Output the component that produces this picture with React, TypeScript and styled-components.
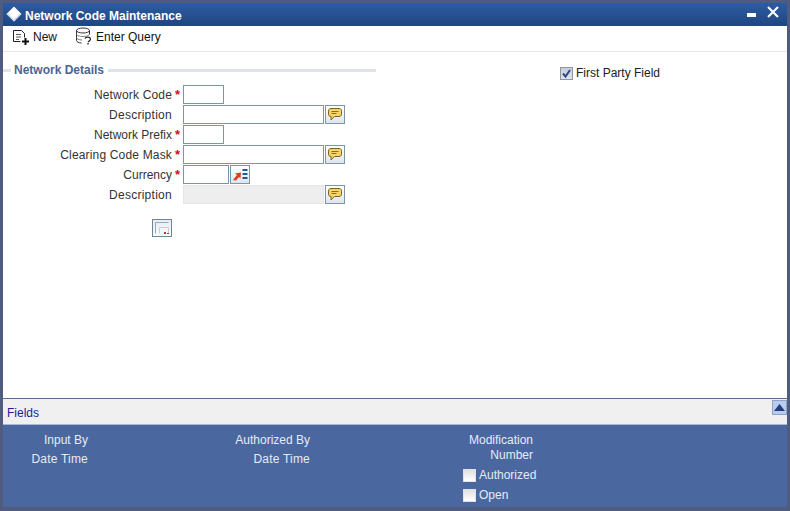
import * as React from 'react';
import styled, { createGlobalStyle } from 'styled-components';

const GlobalStyle = createGlobalStyle`
  html, body {
    margin: 0;
    padding: 0;
    background: #4f5b7f;
  }
  * {
    box-sizing: border-box;
  }
`;

const Window = styled.div`
  width: 790px;
  height: 511px;
  padding: 3px 3px 4px 3px;
  background: #4f5b7f;
  display: flex;
  flex-direction: column;
  font-family: 'Liberation Sans', Arial, sans-serif;
  font-size: 12px;
  color: #222;
`;

const TitleBar = styled.div`
  height: 23px;
  flex-shrink: 0;
  display: flex;
  align-items: center;
  padding: 0 8px 0 3px;
  background: linear-gradient(#2c5aa6, #27528f 50%, #1f4483);
  color: #fff;
  font-weight: 700;
  font-size: 12px;
`;

const Diamond = styled.span`
  display: flex;
  align-self: flex-start;
  padding-top: 3px;
`;

const TitleText = styled.span`
  margin-left: 3px;
  padding-top: 2px;
  flex: 1;
`;

const WindowControls = styled.div`
  display: flex;
  align-self: flex-start;
  align-items: flex-start;
  gap: 11px;
  padding-top: 3px;
`;

const MinimizeSlot = styled.span`
  display: flex;
  padding-top: 7px;
`;

const Toolbar = styled.div`
  height: 26px;
  flex-shrink: 0;
  display: flex;
  align-items: flex-start;
  padding: 0 0 0 9px;
  background: #fff;
  border-bottom: 1px solid #e4e6ea;
`;

const ToolButton = styled.div<{ $width: number }>`
  width: ${(p) => p.$width}px;
  height: 20px;
  display: flex;
  align-items: center;
  gap: 3px;
  font-size: 12px;
  color: #111;
`;

const ToolLabel = styled.span`
  padding-top: 1px;
`;

const Main = styled.div`
  flex: 1;
  display: flex;
  background: #fff;
  border-bottom: 1px solid #5a6b8c;
`;

const LeftPane = styled.div`
  width: 373px;
  padding-top: 10px;
`;

const RightPane = styled.div`
  flex: 1;
  padding: 14px 0 0 184px;
`;

const Legend = styled.div`
  display: flex;
  align-items: center;
  height: 16px;
  color: #4a6591;
  font-weight: 700;
  font-size: 12px;
  &::before {
    content: '';
    width: 8px;
    height: 3px;
    margin-right: 3px;
    background: #dfe3eb;
  }
  &::after {
    content: '';
    flex: 1;
    height: 3px;
    margin-left: 4px;
    background: #dfe3eb;
  }
`;

const Form = styled.div`
  display: grid;
  grid-template-columns: 169px 11px 1fr;
  grid-auto-rows: 20px;
  margin-top: 6px;
  align-items: center;
`;

const Label = styled.label<{ $spacing: number }>`
  text-align: right;
  padding-top: 2px;
  color: #333;
  font-size: 12px;
  letter-spacing: ${(p) => p.$spacing}px;
`;

const Star = styled.span`
  color: #c8101a;
  font-size: 13px;
  font-weight: 700;
  padding: 2px 0 0 3px;
  line-height: 12px;
`;

const FieldCell = styled.div`
  display: flex;
  align-items: center;
  grid-column: 3;
`;

const TextInput = styled.div<{ $width: number; $disabled?: boolean }>`
  width: ${(p) => p.$width}px;
  height: 19px;
  background: ${(p) => (p.$disabled ? '#eeeeee' : '#fff')};
  border: 1px solid ${(p) => (p.$disabled ? '#e6e6e6' : '#7b96a6')};
`;

const IconButton = styled.div`
  width: 20px;
  height: 19px;
  margin-left: 1px;
  display: flex;
  align-items: center;
  justify-content: center;
  background: linear-gradient(#ffffff, #dde5ee);
  border: 1px solid #7b96a6;
`;

const ExpandRow = styled.div`
  padding: 15px 0 0 149px;
`;

const ExpandButton = styled.div`
  width: 20px;
  height: 18px;
  display: flex;
  align-items: center;
  justify-content: center;
  background: linear-gradient(#e8edf2, #f8fafc);
  border: 1px solid #6f8596;
`;

const CheckRow = styled.label`
  display: flex;
  align-items: center;
  gap: 3px;
  font-size: 12px;
  color: #222;
`;

const CheckBox = styled.span`
  width: 13px;
  height: 13px;
  display: flex;
  align-items: center;
  justify-content: center;
  background: linear-gradient(#c9cdd6, #e2e4ea);
  border: 1px solid #8f96a3;
`;

const FieldsBar = styled.div`
  height: 26px;
  flex-shrink: 0;
  display: flex;
  align-items: flex-start;
  justify-content: space-between;
  padding: 7px 0 0 4px;
  background: #f0f0f0;
  border-bottom: 1px solid #aab6d2;
  color: #1c1ca0;
  font-size: 12px;
`;

const CollapseButton = styled.div`
  width: 15px;
  height: 15px;
  margin-top: -6px;
  display: flex;
  align-items: center;
  justify-content: center;
  background: #b9cdea;
  border: 1px solid #8ea3cc;
`;

const Footer = styled.div`
  height: 82px;
  flex-shrink: 0;
  display: flex;
  padding-top: 8px;
  background: #4a67a0;
  color: #e6ebf5;
  font-size: 12px;
`;

const AuditColumn = styled.div<{ $width: number }>`
  width: ${(p) => p.$width}px;
  display: flex;
  flex-direction: column;
  align-items: flex-end;
  gap: 5px;
  line-height: 14px;
`;

const DateLabel = styled.span`
  letter-spacing: 0.2px;
`;

const ModColumn = styled.div`
  width: 223px;
  display: flex;
  flex-direction: column;
  line-height: 15px;
`;

const ModLine = styled.div`
  text-align: right;
`;

const FooterCheck = styled.label`
  display: flex;
  align-items: center;
  height: 20px;
  padding-left: 153px;
  gap: 3px;
  margin-top: 2px;
  & + & {
    margin-top: 0;
  }
`;

const FooterBox = styled.span`
  width: 13px;
  height: 13px;
  flex-shrink: 0;
  background: linear-gradient(#e0e0e0, #ffffff);
  border: 1px solid #dfe2e8;
`;

const NoteIcon = () => (
  <svg width="16" height="15" viewBox="0 0 16 15">
    <path
      d="M4 1.500h8c1.400 0 2.500 1 2.500 2.300v3.400c0 1.300-1.100 2.300-2.500 2.300H7.500L4 13V9.500c-1.600 0-2.500-1-2.500-2.300V3.800C1.500 2.500 2.600 1.500 4 1.500z"
      fill="#f6d568"
      stroke="#7a6420"
    />
    <path d="M4.500 4.500h7M4.500 6.500h5" stroke="#8a6f1f" />
  </svg>
);

const ListPickIcon = () => (
  <svg width="16" height="13" viewBox="0 0 16 13">
    <path d="M1 12l4-5-2-1.500 6-1-.5 6-1.500-1.500-3 3.500z" fill="#d8401c" />
    <path d="M10.500 1h5v2h-5zM10.500 5h5v2h-5zM10.500 9h5v2h-5z" fill="#1f5a94" />
  </svg>
);

const NewIcon = () => (
  <svg width="18" height="17" viewBox="0 0 18 17" fill="none">
    <path d="M1.500 2.500h8l3 3v4M1.500 2.500v11h7" stroke="#222" />
    <path d="M4 6.500h5M4 9h5M4 11.500h3" stroke="#555" />
    <path d="M10 13.500h7M13.500 10v7" stroke="#111" strokeWidth="2" />
  </svg>
);

const QueryIcon = () => (
  <svg width="18" height="18" viewBox="0 0 18 18" fill="none">
    <ellipse cx="8" cy="3.500" rx="6.500" ry="2.500" stroke="#333" />
    <path d="M1.500 3.500v10c0 1.400 2.500 2.500 5 2.500M14.500 3.500v4" stroke="#333" />
    <path d="M1.500 7c0 1.400 3 2.500 6.500 2.500S14.500 8.400 14.500 7M1.500 10.500c0 1.400 2.500 2.500 5.500 2.500" stroke="#777" />
    <path d="M10 11.500c.5-1.800 5-2 5.500.3.300 1.500-1.500 2.200-2.500 3.200M13 16v1.500" stroke="#222" strokeWidth="1.300" />
  </svg>
);

const DiamondIcon = () => (
  <svg width="16" height="16" viewBox="0 0 16 16">
    <path d="M8 0.500L15.500 8 8 15.500 0.500 8z" fill="#fff" />
    <path d="M8 15.500L15.500 8 14.500 7 8 13.500 1.500 7 0.500 8z" fill="#c7d4e8" />
  </svg>
);

const MinimizeIcon = () => (
  <svg width="9" height="4" viewBox="0 0 9 4">
    <rect width="9" height="4" fill="#fff" />
  </svg>
);

const CloseIcon = () => (
  <svg width="12" height="12" viewBox="0 0 12 12">
    <path d="M1 1l10 10M11 1L1 11" stroke="#fff" strokeWidth="2" />
  </svg>
);

const CheckMark = () => (
  <svg width="11" height="11" viewBox="0 0 11 11" fill="none">
    <path d="M2 5.500l2.500 3L9 2" stroke="#2c4a90" strokeWidth="2" />
  </svg>
);

const ExpandIcon = () => (
  <svg width="16" height="14" viewBox="0 0 16 14" fill="none">
    <path d="M1.500 12.500v-11h13" stroke="#9aa7b4" />
    <path d="M5.500 12.500v-6h9v6" stroke="#c6ced6" />
    <path d="M10 11h2v2h-2zM13 12h2v1h-2z" fill="#b0352a" />
  </svg>
);

const ArrowUpIcon = () => (
  <svg width="11" height="7" viewBox="0 0 11 7">
    <path d="M5.500 0L11 7H0z" fill="#1f3f7f" />
  </svg>
);

interface FieldRowProps {
  label: string;
  required?: boolean;
  spacing?: number;
  children: React.ReactNode;
}

const FieldRow = ({ label, required, spacing = 0.17, children }: FieldRowProps) => (
  <>
    <Label $spacing={spacing}>{label}</Label>
    {required ? <Star>*</Star> : <span />}
    <FieldCell>{children}</FieldCell>
  </>
);

const App = () => (
  <>
    <GlobalStyle />
    <Window>
      <TitleBar>
        <Diamond>
          <DiamondIcon />
        </Diamond>
        <TitleText>Network Code Maintenance</TitleText>
        <WindowControls>
          <MinimizeSlot>
            <MinimizeIcon />
          </MinimizeSlot>
          <CloseIcon />
        </WindowControls>
      </TitleBar>
      <Toolbar>
        <ToolButton $width={63}>
          <NewIcon />
          <ToolLabel>New</ToolLabel>
        </ToolButton>
        <ToolButton $width={100}>
          <QueryIcon />
          <ToolLabel>Enter Query</ToolLabel>
        </ToolButton>
      </Toolbar>
      <Main>
        <LeftPane>
          <Legend>Network Details</Legend>
          <Form>
            <FieldRow label="Network Code" required>
              <TextInput $width={41} />
            </FieldRow>
            <FieldRow label="Description" spacing={0.27}>
              <TextInput $width={141} />
              <IconButton>
                <NoteIcon />
              </IconButton>
            </FieldRow>
            <FieldRow label="Network Prefix" required spacing={0}>
              <TextInput $width={41} />
            </FieldRow>
            <FieldRow label="Clearing Code Mask" required>
              <TextInput $width={141} />
              <IconButton>
                <NoteIcon />
              </IconButton>
            </FieldRow>
            <FieldRow label="Currency" required spacing={0}>
              <TextInput $width={46} />
              <IconButton>
                <ListPickIcon />
              </IconButton>
            </FieldRow>
            <FieldRow label="Description" spacing={0.27}>
              <TextInput $width={141} $disabled />
              <IconButton>
                <NoteIcon />
              </IconButton>
            </FieldRow>
          </Form>
          <ExpandRow>
            <ExpandButton>
              <ExpandIcon />
            </ExpandButton>
          </ExpandRow>
        </LeftPane>
        <RightPane>
          <CheckRow>
            <CheckBox>
              <CheckMark />
            </CheckBox>
            First Party Field
          </CheckRow>
        </RightPane>
      </Main>
      <FieldsBar>
        Fields
        <CollapseButton>
          <ArrowUpIcon />
        </CollapseButton>
      </FieldsBar>
      <Footer>
        <AuditColumn $width={85}>
          <span>Input By</span>
          <DateLabel>Date Time</DateLabel>
        </AuditColumn>
        <AuditColumn $width={222}>
          <span>Authorized By</span>
          <DateLabel>Date Time</DateLabel>
        </AuditColumn>
        <ModColumn>
          <ModLine>Modification</ModLine>
          <ModLine>Number</ModLine>
          <FooterCheck>
            <FooterBox />
            Authorized
          </FooterCheck>
          <FooterCheck>
            <FooterBox />
            Open
          </FooterCheck>
        </ModColumn>
      </Footer>
    </Window>
  </>
);

export default App;
